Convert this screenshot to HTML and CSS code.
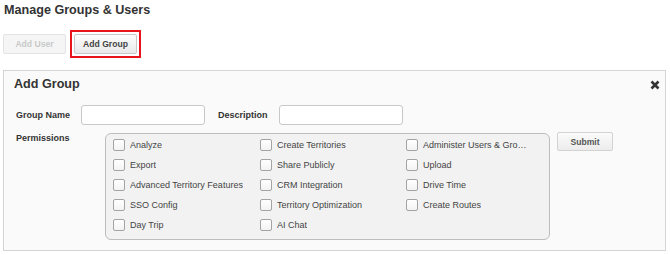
FILE: index.html
```html
<!DOCTYPE html>
<html lang="en">
<head>
<meta charset="utf-8">
<title>Manage Groups &amp; Users</title>
<link rel="stylesheet" href="styles.css">
</head>
<body>
<div class="page">
  <h1 class="title">Manage Groups &amp; Users</h1>
  <div class="actions">
    <button class="btn btn-disabled" type="button">Add User</button>
    <span class="highlight"><button class="btn btn-active" type="button">Add Group</button></span>
  </div>
  <section class="panel">
    <header class="panel-head">
      <h2 class="panel-title">Add Group</h2>
      <button class="close" type="button" aria-label="Close">
        <svg width="10" height="10" viewBox="0 0 10 10"><path d="M1.5 1.5 L8.5 8.5 M8.5 1.5 L1.5 8.5" stroke="#333" stroke-width="2.6" stroke-linecap="butt" fill="none"/></svg>
      </button>
    </header>
    <div class="row fields">
      <label class="lbl lbl-name">Group Name</label>
      <input class="text-input" type="text">
      <label class="lbl lbl-desc">Description</label>
      <input class="text-input" type="text">
    </div>
    <div class="row perms">
      <span class="lbl lbl-perm">Permissions</span>
      <div class="perm-box">
        <label class="perm"><input type="checkbox"><span>Analyze</span></label>
        <label class="perm"><input type="checkbox"><span>Create Territories</span></label>
        <label class="perm"><input type="checkbox"><span>Administer Users &amp; Groups</span></label>
        <label class="perm"><input type="checkbox"><span>Export</span></label>
        <label class="perm"><input type="checkbox"><span>Share Publicly</span></label>
        <label class="perm"><input type="checkbox"><span>Upload</span></label>
        <label class="perm"><input type="checkbox"><span>Advanced Territory Features</span></label>
        <label class="perm"><input type="checkbox"><span>CRM Integration</span></label>
        <label class="perm"><input type="checkbox"><span>Drive Time</span></label>
        <label class="perm"><input type="checkbox"><span>SSO Config</span></label>
        <label class="perm"><input type="checkbox"><span>Territory Optimization</span></label>
        <label class="perm"><input type="checkbox"><span>Create Routes</span></label>
        <label class="perm"><input type="checkbox"><span>Day Trip</span></label>
        <label class="perm"><input type="checkbox"><span>AI Chat</span></label>
      </div>
      <button class="btn submit" type="button">Submit</button>
    </div>
  </section>
</div>
</body>
</html>
```
FILE: styles.css
```css
* { box-sizing: border-box; }
html, body { margin: 0; padding: 0; background: #fff; }
body {
  font-family: "Liberation Sans", Arial, sans-serif;
  color: #333;
}
.page {
  width: 670px;
  padding: 3px 4px 0 3px;
}
.title {
  margin: 0 0 0 1px;
  font-size: 12.6px;
  line-height: 15px;
  font-weight: bold;
  color: #333;
}
.actions {
  display: flex;
  align-items: center;
  gap: 4px;
  margin-top: 12px;
}
.highlight {
  display: flex;
  border: 2px solid #e8141c;
  padding: 2px;
}
.btn {
  height: 20px;
  width: 63px;
  padding: 0;
  font-family: inherit;
  font-size: 8.6px;
  font-weight: bold;
  border-radius: 2px;
  cursor: pointer;
}
.btn-disabled {
  background: #f5f5f5;
  border: 1px solid #e3e3e3;
  color: #c9c9c9;
}
.btn-active {
  background: linear-gradient(#fdfdfd, #e9e9e9);
  border: 1px solid #c8c8c8;
  color: #444;
}
.panel {
  margin-top: 12px;
  border: 1px solid #d4d4d4;
  background: #fafafa;
  padding: 6px 5px 10px 10px;
}
.panel-head {
  display: flex;
  align-items: center;
  justify-content: space-between;
  height: 15px;
}
.panel-title {
  margin: 0;
  font-size: 12.6px;
  line-height: 15px;
  font-weight: bold;
  color: #333;
}
.close {
  display: flex;
  padding: 0;
  border: 0;
  background: none;
  width: 10px;
  height: 10px;
  cursor: pointer;
}
.row {
  display: flex;
}
.fields {
  margin-top: 13px;
  align-items: center;
  height: 20px;
}
.lbl {
  font-size: 9px;
  line-height: 11px;
  font-weight: bold;
  color: #333;
}
.lbl-name { margin-left: 2px; width: 65px; }
.lbl-desc { width: 61px; }
.text-input {
  width: 124px;
  height: 20px;
  border: 1px solid #c8c8c8;
  border-radius: 3px;
  background: #fff;
  margin: 0;
}
.text-input:first-of-type { margin-right: 13px; }
.perms {
  margin-top: 8px;
  align-items: flex-start;
}
.lbl-perm { margin-left: 2px; width: 89px; }
.perm-box {
  width: 445px;
  border: 1px solid #bdbdbd;
  border-radius: 6px;
  background: #f2f2f2;
  padding: 1px 0 4px 7px;
  display: grid;
  grid-template-columns: 147px 146px 123px;
  grid-auto-rows: 20px;
}
.perm {
  display: flex;
  align-items: center;
  gap: 5px;
  min-width: 0;
  font-size: 9px;
  color: #444;
}
.perm span {
  white-space: nowrap;
  overflow: hidden;
  text-overflow: ellipsis;
  min-width: 0;
}
.perm input {
  appearance: none;
  -webkit-appearance: none;
  margin: 0;
  flex: none;
  width: 12px;
  height: 12px;
  border: 1px solid #a3a3a3;
  border-radius: 2px;
  background: linear-gradient(#fff, #f3f3f3);
}
.submit {
  margin-left: 7px;
  margin-top: -1px;
  width: 56px;
  height: 19px;
  background: linear-gradient(#fbfbfb, #ececec);
  border: 1px solid #d3d3d3;
  color: #555;
}
```
